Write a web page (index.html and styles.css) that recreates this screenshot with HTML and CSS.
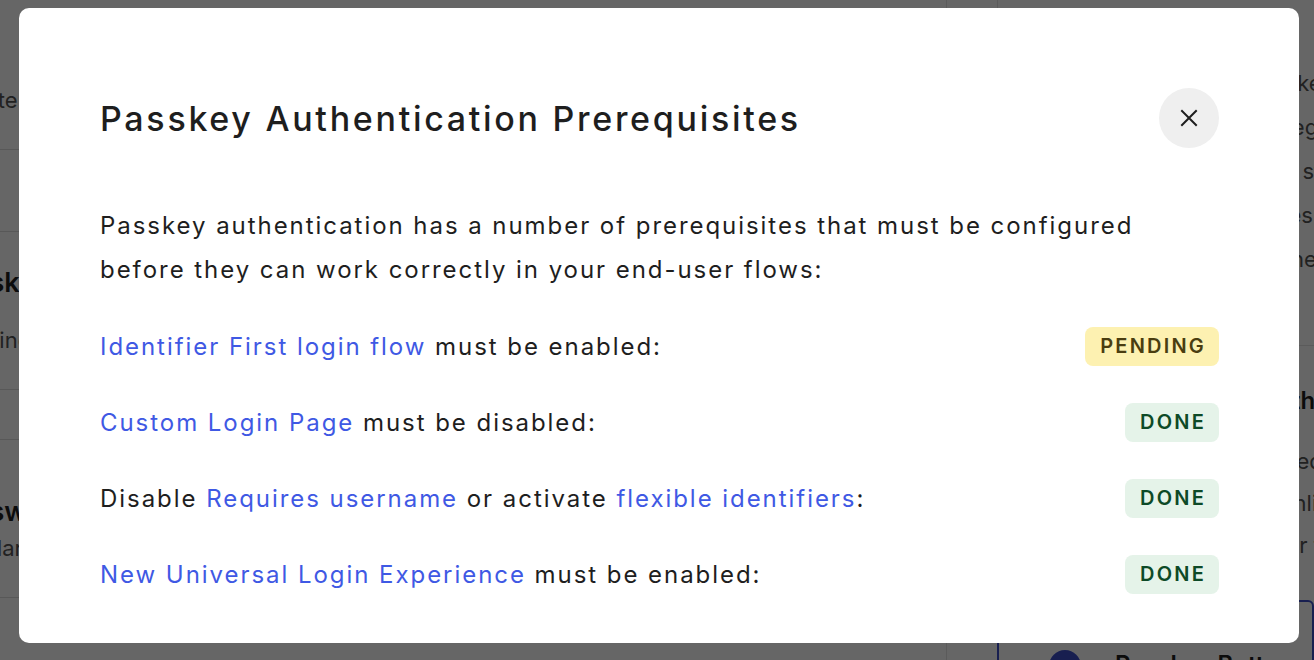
FILE: index.html
```html
<!DOCTYPE html>
<html lang="en">
<head>
  <meta charset="UTF-8" />
  <meta name="viewport" content="width=device-width, initial-scale=1" />
  <title>Authentication Profile</title>
  <link rel="stylesheet" href="styles.css">
</head>
<body>

  <div class="page">
    <main class="content">
      <section class="setting setting-top">
        <p class="setting-desc">Update the identifier used by database connections.</p>
      </section>
      <section class="setting setting-gap"></section>
      <section class="setting setting-block">
        <h3 class="setting-title">Passkeys</h3>
        <p class="setting-desc">Enabling passkeys lets users sign in without a password.</p>
      </section>
      <section class="setting setting-gap setting-gap-sm"></section>
      <section class="setting setting-block setting-block-tight">
        <h3 class="setting-title">Password</h3>
        <p class="setting-desc">Standard password rules apply to this connection.</p>
      </section>
    </main>

    <aside class="sidebar">
      <div class="panel panel-intro">
        <p class="panel-text">Users who enrolled a passkey will be able to authenticate<br>
          with it, or fall back to the regular login method they have<br>
          used before. Passkeys are stored on the user's device and are<br>
          synced across their devices by the platform's password manager<br>
          and work with biometric checks.</p>
      </div>
      <div class="panel panel-bordered">
        <h4 class="panel-title">Prompt presentation in the login box</h4>
        <p class="panel-text">Choose how users are asked to create a passkey:<br>
          a dedicated button, or an inline prompt in the<br>
          login box that appears after the user enters their</p>
      </div>
      <div class="option option-active">
        <span class="option-dot"></span>
        <span class="option-label">Passkey Button</span>
      </div>
    </aside>
  </div>

  <div class="backdrop"></div>

  <div class="modal" role="dialog" aria-labelledby="modal-title">
    <header class="modal-header">
      <h2 id="modal-title" class="modal-title">Passkey Authentication Prerequisites</h2>
      <button class="close-btn" aria-label="Close">
        <svg width="18" height="18" viewBox="0 0 18 18" fill="none" stroke="#1e1e1e" stroke-width="2" stroke-linecap="square">
          <path d="M2 2 L16 16 M16 2 L2 16" />
        </svg>
      </button>
    </header>

    <p class="modal-intro">Passkey authentication has a number of prerequisites that must be configured
      before they can work correctly in your end-user flows:</p>

    <ul class="checklist">
      <li class="check-row">
        <span><a href="#">Identifier First login flow</a> must be enabled:</span>
        <span class="badge badge-pending">PENDING</span>
      </li>
      <li class="check-row">
        <span><a href="#">Custom Login Page</a> must be disabled:</span>
        <span class="badge badge-done">DONE</span>
      </li>
      <li class="check-row">
        <span>Disable <a href="#">Requires username</a> or activate <a href="#">flexible identifiers</a>:</span>
        <span class="badge badge-done">DONE</span>
      </li>
      <li class="check-row">
        <span><a href="#">New Universal Login Experience</a> must be enabled:</span>
        <span class="badge badge-done">DONE</span>
      </li>
    </ul>
  </div>

</body>
</html>
```

FILE: styles.css
```css
* {
  box-sizing: border-box;
}

html, body {
  margin: 0;
  height: 100%;
  overflow: hidden;
}

body {
  font-family: Inter, "Noto Sans", sans-serif;
  color: #1e1e1e;
  background: #fff;
}

/* page behind the dialog */

.page {
  display: flex;
  height: 100%;
}

.content {
  width: 1005px;
  margin-left: -58px;
  flex-shrink: 0;
  border-right: 1px solid #e3e3e3;
}

.setting {
  border-bottom: 1px solid #dcdcdc;
  white-space: nowrap;
}

.setting-top {
  height: 150px;
  padding-top: 83px;
}

.setting-gap {
  height: 82px;
}

.setting-gap-sm {
  height: 50px;
}

.setting-block {
  height: 158px;
  padding-top: 34px;
}

.setting-block-tight {
  padding-top: 55px;
}

.setting-title {
  margin: 0 0 23px;
  font-size: 27px;
  font-weight: 600;
  line-height: 34px;
}

.setting-block-tight .setting-title {
  margin-bottom: 2px;
}

.setting-desc {
  margin: 0;
  font-size: 22px;
  line-height: 34px;
  color: #545454;
}

.sidebar {
  flex: 1;
  min-width: 0;
  padding-left: 50px;
}

.panel {
  border-left: 1px solid #e3e3e3;
  padding-left: 24px;
  white-space: nowrap;
  overflow: hidden;
}

.panel-intro {
  height: 345px;
  padding-top: 61px;
}

.panel-bordered {
  height: 255px;
  padding-top: 38px;
  border-top: 1px solid #e3e3e3;
}

.panel-title {
  margin: 0 0 22px;
  font-size: 24px;
  font-weight: 600;
  line-height: 34px;
}

.panel-text {
  margin: 0;
  font-size: 22px;
  line-height: 44px;
  color: #545454;
}

.panel-bordered .panel-text {
  line-height: 42px;
}

.option {
  display: flex;
  align-items: flex-start;
  gap: 34px;
  height: 120px;
  padding: 48px 0 0 50px;
  border: 2px solid #3d4fc9;
  border-radius: 6px;
}

.option-dot {
  flex-shrink: 0;
  width: 32px;
  height: 32px;
  border-radius: 50%;
  background: #3d4fc9;
}

.option-label {
  font-size: 24px;
  font-weight: 600;
  white-space: nowrap;
}

.backdrop {
  position: fixed;
  inset: 0;
  background: rgba(0, 0, 0, 0.6);
}

/* dialog */

.modal {
  position: fixed;
  left: 19px;
  top: 8px;
  width: 1280px;
  height: 635px;
  padding: 80px 80px 0 81px;
  background: #fff;
  border-radius: 10px;
}

.modal-header {
  display: flex;
  align-items: center;
  justify-content: space-between;
  height: 60px;
}

.modal-title {
  margin: 0;
  font-size: 34px;
  font-weight: 500;
  letter-spacing: 2.7px;
}

.close-btn {
  display: flex;
  align-items: center;
  justify-content: center;
  width: 60px;
  height: 60px;
  padding: 0;
  border: none;
  border-radius: 50%;
  background: #efefef;
  cursor: pointer;
}

.modal-intro {
  max-width: 1090px;
  margin: 56px 0 34px;
  font-size: 24px;
  line-height: 44px;
  letter-spacing: 1.95px;
}

.checklist {
  list-style: none;
  margin: 0;
  padding: 0;
  display: flex;
  flex-direction: column;
  gap: 36px;
}

.check-row {
  display: flex;
  align-items: center;
  justify-content: space-between;
  height: 40px;
  font-size: 24px;
  letter-spacing: 1.95px;
}

.check-row a {
  color: #3f59e4;
  text-decoration: none;
}

.badge {
  display: inline-flex;
  align-items: center;
  height: 39px;
  padding: 0 13px 0 15px;
  border-radius: 8px;
  font-size: 20px;
  font-weight: 600;
  letter-spacing: 2.2px;
}

.badge-pending {
  background: #fdf1b1;
  color: #4a3d10;
}

.badge-done {
  background: #e5f3e9;
  color: #0d4a27;
}
```
